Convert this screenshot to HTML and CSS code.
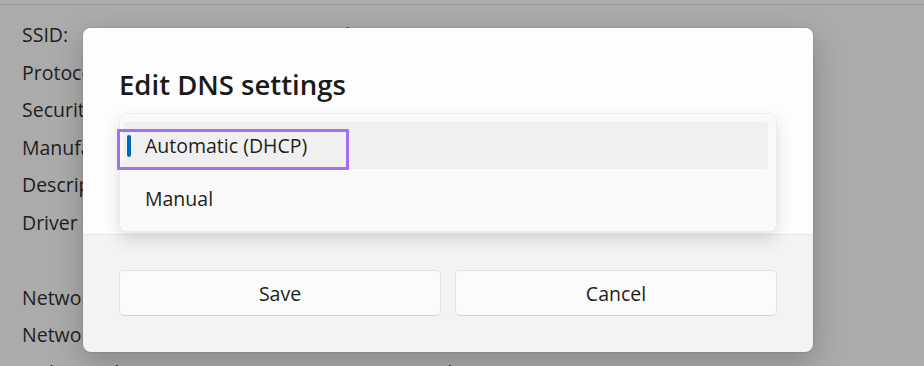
FILE: index.html
```html
<!DOCTYPE html>
<html lang="en">
<head>
<meta charset="utf-8">
<title>Edit DNS settings</title>
<link rel="stylesheet" href="styles.css">
</head>
<body>
<div class="topstrip"></div>
<div class="props">
  <div class="row"><span class="label">SSID:</span><span class="value">kanna 5G</span></div>
  <div class="row"><span class="label">Protocol:</span><span class="value">Wi-Fi 5 (802.11ac)</span></div>
  <div class="row"><span class="label">Security type:</span><span class="value">WPA2-Personal</span></div>
  <div class="row"><span class="label">Manufacturer:</span><span class="value">Intel Corporation</span></div>
  <div class="row"><span class="label">Description:</span><span class="value">Intel(R) Wi-Fi 6 AX201 160MHz</span></div>
  <div class="row"><span class="label">Driver version:</span><span class="value">22.150.0.3</span></div>
  <div class="row"></div>
  <div class="row"><span class="label">Network band:</span><span class="value">5 GHz</span></div>
  <div class="row"><span class="label">Network channel:</span><span class="value">36</span></div>
  <div class="row"><span class="label">Link speed (Receive/Transmit):</span><span class="value">780/780 (Mbps)</span></div>
</div>

<div class="dialog">
  <div class="dialog-body">
    <h1 class="title">Edit DNS settings</h1>
    <div class="flyout">
      <div class="item selected">
        <span class="indicator"></span>
        <span class="item-text">Automatic (DHCP)</span>
        <span class="annotation"></span>
      </div>
      <div class="item">
        <span class="item-text">Manual</span>
      </div>
    </div>
  </div>
  <div class="dialog-footer">
    <button class="btn">Save</button>
    <button class="btn">Cancel</button>
  </div>
</div>
</body>
</html>
```
FILE: styles.css
```css
html, body {
  margin: 0;
  padding: 0;
}
body {
  width: 924px;
  height: 366px;
  overflow: hidden;
  background: #ababab;
  font-family: "Open Sans", "Noto Sans", "Liberation Sans", sans-serif;
  color: #1e1e1e;
  position: relative;
}
.topstrip {
  height: 4px;
  background: #adadad;
  border-bottom: 1px solid #979797;
}
.props {
  padding: 11px 0 0 22px;
  font-size: 19.5px;
}
.row {
  height: 37.5px;
  line-height: 37.5px;
  display: flex;
  white-space: nowrap;
}
.label {
  width: 323px;
}
.dialog {
  position: absolute;
  left: 83px;
  top: 28px;
  width: 730px;
  height: 324px;
  border-radius: 8px;
  overflow: hidden;
  background: #f3f3f3;
  box-shadow: 0 10px 30px rgba(0, 0, 0, 0.22), 0 0 2px rgba(0, 0, 0, 0.2);
  display: flex;
  flex-direction: column;
}
.dialog-body {
  background: #fdfdfd;
  height: 206px;
  padding: 0 36px;
  box-sizing: border-box;
  position: relative;
  z-index: 1;
}
.title {
  margin: 0;
  padding-top: 39px;
  height: 46px;
  box-sizing: content-box;
  font-size: 27.5px;
  font-weight: 600;
  line-height: 36px;
  color: #1a1a1a;
}
.flyout {
  height: 119px;
  box-sizing: border-box;
  background: #f9f9f9;
  border: 1px solid #ececec;
  border-radius: 8px;
  box-shadow: 0 8px 16px rgba(0, 0, 0, 0.12);
  padding: 8px 8px 0 3px;
  display: flex;
  flex-direction: column;
  gap: 6px;
}
.item {
  position: relative;
  height: 47px;
  border-radius: 4px;
  display: flex;
  align-items: center;
  font-size: 19.5px;
  color: #1e1e1e;
}
.item.selected {
  background: #f0f0f0;
}
.item-text {
  padding-left: 22px;
}
.indicator {
  position: absolute;
  left: 4px;
  top: 13px;
  width: 4px;
  height: 22px;
  border-radius: 2px;
  background: #0067c0;
}
.annotation {
  position: absolute;
  left: -6px;
  top: 7px;
  width: 232px;
  height: 41px;
  box-sizing: border-box;
  border: 3px solid #a170f5;
  border-radius: 1px;
}
.dialog-footer {
  flex: 1;
  border-top: 1px solid #e8e8e8;
  padding: 35px 36px 0;
  display: flex;
  gap: 14px;
}
.btn {
  flex: 1;
  height: 46px;
  background: #fbfbfb;
  border: 1px solid #e3e3e3;
  border-bottom-color: #d2d2d2;
  border-radius: 5px;
  font-family: inherit;
  font-size: 19.5px;
  color: #1e1e1e;
  padding: 0;
}
```
